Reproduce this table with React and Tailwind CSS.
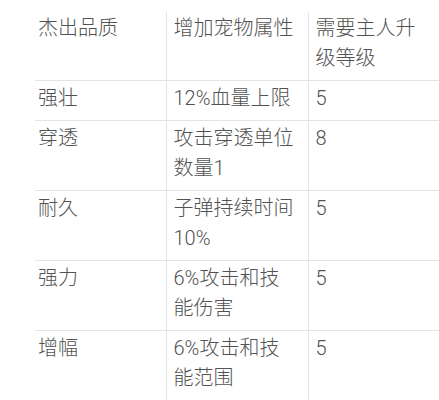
const header = [["杰出品质"], ["增加宠物属性"], ["需要主人升", "级等级"]];

const rows = [
  [["强壮"], ["12%血量上限"], ["5"]],
  [["穿透"], ["攻击穿透单位", "数量1"], ["8"]],
  [["耐久"], ["子弹持续时间", "10%"], ["5"]],
  [["强力"], ["6%攻击和技", "能伤害"], ["5"]],
  [["增幅"], ["6%攻击和技", "能范围"], ["5"]],
];

const colClass = [
  "w-[131px] pl-[3px]",
  "w-[142px] pl-[7px] border-l border-[#e4e4e4]",
  "w-[131px] pl-[7px] border-l border-[#e4e4e4]",
];

const Cell = ({ lines, i, first }) => (
  <td className={`${colClass[i]} ${first ? "pt-[1px]" : "pt-[2px]"} pb-[7px] align-top`}>
    {lines.map((l) => (
      <div key={l} className="whitespace-nowrap">
        {l}
      </div>
    ))}
  </td>
);

export default function App() {
  return (
    <div
      className="w-[439px] h-[400px] bg-white pt-[12px] pl-[35px] overflow-hidden text-[20px] leading-[30px] font-light text-[#525252]"
      style={{ fontFamily: 'Roboto, "Noto Sans CJK SC", sans-serif' }}
    >
      <table className="border-collapse table-fixed w-[404px]">
        <tbody>
          <tr>
            {header.map((c, i) => (
              <Cell key={i} lines={c} i={i} first />
            ))}
          </tr>
          {rows.map((r, ri) => (
            <tr key={ri} className="border-t border-[#e4e4e4]">
              {r.map((c, i) => (
                <Cell key={i} lines={c} i={i} />
              ))}
            </tr>
          ))}
        </tbody>
      </table>
    </div>
  );
}
